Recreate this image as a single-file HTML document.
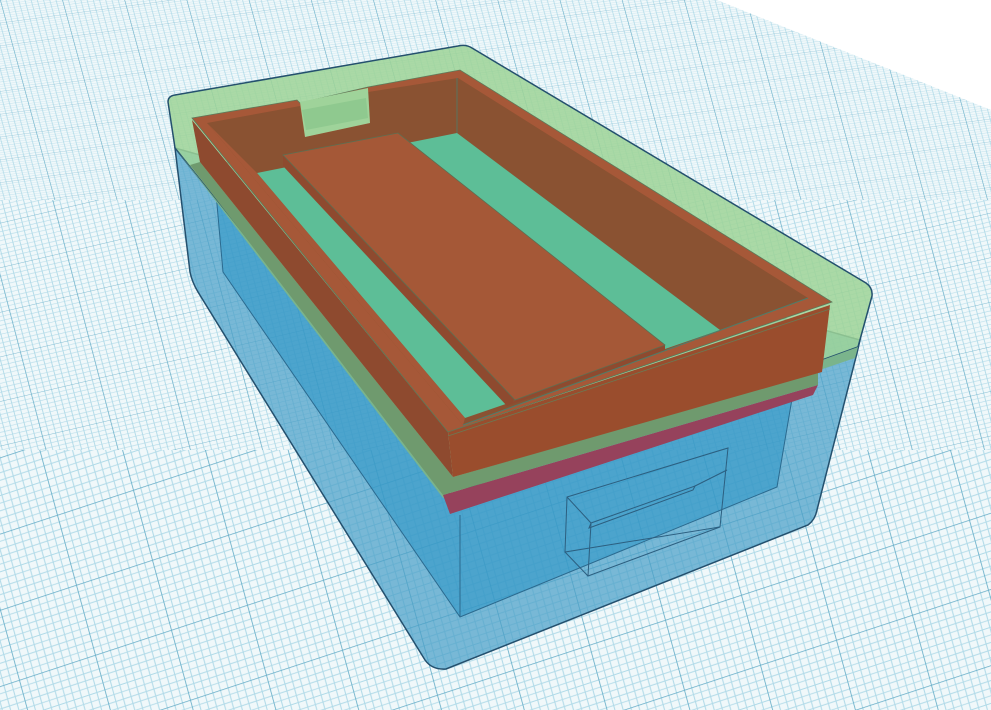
<!DOCTYPE html>
<html><head><meta charset="utf-8"><style>
html,body{margin:0;padding:0;width:991px;height:710px;overflow:hidden;background:#e6f2f6}
svg{display:block}
</style></head><body>
<svg width="991" height="710" viewBox="0 0 991 710" xmlns="http://www.w3.org/2000/svg">
<defs>
<g id="cell">
<rect width="10" height="10" fill="#f0f8fa"/>
<g stroke="#b0dae8" stroke-width="0.13">
<path d="M1 0V10M2 0V10M3 0V10M4 0V10M5 0V10M6 0V10M7 0V10M8 0V10M9 0V10M0 1H10M0 2H10M0 3H10M0 4H10M0 5H10M0 6H10M0 7H10M0 8H10M0 9H10"/>
</g>
<path d="M0 0V10M0 0H10" stroke="#62abc6" stroke-width="0.2" fill="none"/>
</g>
<pattern id="g1" width="10" height="10" patternUnits="userSpaceOnUse" patternTransform="matrix(6,-0.8,0.6,2.2,0,0)"><use href="#cell"/></pattern>
<pattern id="g2" width="10" height="10" patternUnits="userSpaceOnUse" patternTransform="matrix(6.8,-1.6,1.1,4.2,0,0)"><use href="#cell"/></pattern>
<pattern id="g3" width="10" height="10" patternUnits="userSpaceOnUse" patternTransform="matrix(7.6,-2.5,1.9,7,0,0)"><use href="#cell"/></pattern>
</defs>
<rect width="991" height="200" fill="url(#g1)"/>
<rect y="200" width="991" height="250" fill="url(#g2)"/>
<rect y="450" width="991" height="260" fill="url(#g3)"/>
<polygon points="717,0 991,0 991,110" fill="#ffffff"/>

<path d="M175,148 L190,272 Q192,282 198,292 L425,660 Q432,670 446,669 L808,525 Q815,520 817,510 L857,353 L860,340 Z" fill="#4aa0c8" fill-opacity="0.72" stroke="#24506e" stroke-width="1.5"/>
<polygon points="215,182 223,272 460,617 777,487 793,393 455,505" fill="#2f96c6" fill-opacity="0.6" stroke="#2b6a8f" stroke-width="1"/>
<line x1="460" y1="515" x2="460" y2="617" stroke="#2b6a8f" stroke-width="1"/>
<g fill="none" stroke="#2c5f80" stroke-width="1">
<polygon points="567,497 728,448 720,527 565,552"/>
<polygon points="591,523 695,486 693,490 589,528"/>
<polyline points="591,523 588,576 720,527"/>
<polyline points="695,486 727,470"/>
<line x1="567" y1="497" x2="591" y2="523"/>
<line x1="565" y1="552" x2="588" y2="576"/>
</g>

<path d="M168,102 Q168,96 175,95 L458,46 Q466,44 472,48 L866,283 Q873,288 872,296 L858,347 L450,495 L175,148 Z" fill="#9dd497" fill-opacity="0.85" stroke="#24506e" stroke-width="1.5"/>
<polygon points="175,148 450,495 858,347 855,358 443,498" fill="#7ab48c"/>

<polygon points="443,495 818,385 813,395 450,514" fill="#96425c"/>
<polygon points="200,162 453,477 818,372 818,385 443,495 190,165" fill="#6f9a6e"/>

<polygon points="192,120 448,432 453,477 200,162" fill="#8e4a2f"/>
<polygon points="448,432 830,305 822,372 453,477" fill="#9a4d2d"/>
<polygon points="192,118 297,100 300,103 368,87 460,70 832,302 448,432" fill="#a65838" stroke="#5d7a5a" stroke-width="0.8"/>
<polygon points="207,123 300,106 305,137 370,123 368,92 458,78 808,298 463,425" fill="#8a5232"/>
<polygon points="300,102 368,88 370,123 305,137" fill="#9fd39a"/>
<polygon points="302,110 366,98 368,118 306,130" fill="#8fc98f"/>
<polygon points="257,173 457,133 720,330 465,418" fill="#5dbe97"/>
<polygon points="207,123 257,173 465,418 463,425" fill="#a65838"/>
<line x1="457" y1="78" x2="457" y2="133" stroke="#4f7d6a" stroke-width="0.8"/>
<polygon points="283,155 283,166 507,406 515,400" fill="#8e4a2f"/>
<polygon points="515,400 665,345 665,351 507,406" fill="#8e4a2f"/>
<polygon points="283,155 398,133 665,345 515,400" fill="#a55837" stroke="#5d6f52" stroke-width="0.8"/>
<polyline points="463,425 808,298" fill="none" stroke="#4f7d6a" stroke-width="1"/>
<polyline points="448,436 830,309" fill="none" stroke="#6a7a55" stroke-width="0.8"/>
</svg>
</body></html>
